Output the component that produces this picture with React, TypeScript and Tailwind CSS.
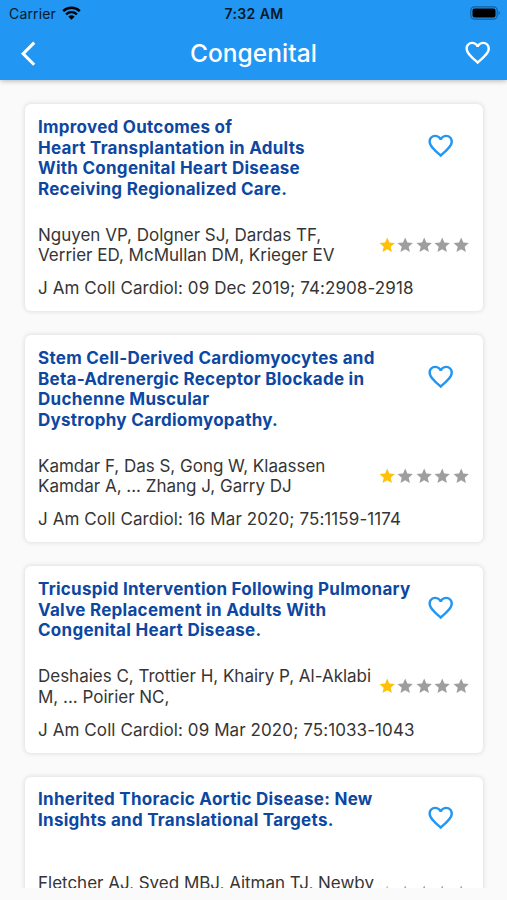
import { MdArrowBackIos, MdFavoriteBorder, MdStar } from "react-icons/md";

type Article = {
	title: string;
	authors: string;
	journal?: string;
	rating: number;
};

const ARTICLES: Article[] = [
	{
		title:
			"Improved Outcomes of\nHeart Transplantation in Adults\nWith Congenital Heart Disease\nReceiving Regionalized Care.",
		authors:
			"Nguyen VP, Dolgner SJ, Dardas TF,\nVerrier ED, McMullan DM, Krieger EV",
		journal: "J Am Coll Cardiol: 09 Dec 2019; 74:2908-2918",
		rating: 1,
	},
	{
		title:
			"Stem Cell-Derived Cardiomyocytes and\nBeta-Adrenergic Receptor Blockade in\nDuchenne Muscular\nDystrophy Cardiomyopathy.",
		authors: "Kamdar F, Das S, Gong W, Klaassen\nKamdar A, ... Zhang J, Garry DJ",
		journal: "J Am Coll Cardiol: 16 Mar 2020; 75:1159-1174",
		rating: 1,
	},
	{
		title:
			"Tricuspid Intervention Following Pulmonary\nValve Replacement in Adults With\nCongenital Heart Disease.",
		authors: "Deshaies C, Trottier H, Khairy P, Al-Aklabi\nM, ... Poirier NC,",
		journal: "J Am Coll Cardiol: 09 Mar 2020; 75:1033-1043",
		rating: 1,
	},
	{
		title:
			"Inherited Thoracic Aortic Disease: New\nInsights and Translational Targets.",
		authors: "Fletcher AJ, Syed MBJ, Aitman TJ, Newby",
		rating: 1,
	},
];

const STARS = [1, 2, 3, 4, 5];

function StatusBar() {
	return (
		<div className="grid h-[27px] grid-cols-3 items-center pl-[9px] pr-[6px] text-[14px] text-[#06192b]">
			<div className="flex items-center gap-[6px]">
				<span className="tracking-[0.15px]">Carrier</span>
				<svg
					className="-mt-[2px]"
					width="19"
					height="14"
					viewBox="0 0 19 14"
					fill="none"
				>
					<path
						d="M1.2 5.1a12 12 0 0 1 16.6 0"
						stroke="#000"
						strokeWidth="2.5"
					/>
					<path
						d="M4.1 8.3a7.8 7.8 0 0 1 10.8 0"
						stroke="#000"
						strokeWidth="2.3"
					/>
					<path d="M9.5 13.8 6.4 10.7a4.5 4.5 0 0 1 6.2 0z" fill="#000" />
				</svg>
			</div>
			<span className="-ml-[2px] text-center font-semibold tracking-[0.4px]">
				7:32 AM
			</span>
			<svg
				className="-mt-[1px] justify-self-end"
				width="31"
				height="14"
				viewBox="0 0 31 14"
			>
				<rect
					x="0.8"
					y="0.8"
					width="26.4"
					height="12.4"
					rx="3.6"
					fill="none"
					stroke="#155f9c"
					strokeWidth="1.2"
				/>
				<rect x="2.5" y="2.5" width="23" height="9" rx="2" fill="#000" />
				<path d="M28.6 5v4c1.6-.6 1.6-3.4 0-4z" fill="#155f9c" />
			</svg>
		</div>
	);
}

function Header() {
	return (
		<header className="relative z-10 h-[80px] shrink-0 bg-[#2196f3] shadow-[0_1px_5px_rgba(0,0,0,0.28)]">
			<StatusBar />
			<div className="grid h-[53px] grid-cols-[60px_1fr_60px] items-center text-white">
				<button type="button" aria-label="Back" className="pl-[20.5px]">
					<MdArrowBackIos className="size-[29.4px]" />
				</button>
				<h1 className="text-center text-[24.5px] font-medium tracking-[0.05px]">
					Congenital
				</h1>
				<button
					type="button"
					aria-label="Favorites"
					className="justify-self-end pr-[15px] pb-[1px]"
				>
					<MdFavoriteBorder className="size-[29.4px]" />
				</button>
			</div>
		</header>
	);
}

function Rating({ value }: { value: number }) {
	return (
		<div className="-mr-[0.5px] flex">
			{STARS.map((star) => (
				<MdStar
					key={star}
					data-on={star <= value}
					className="size-[18.4px] text-[#9e9e9e] data-[on=true]:text-[#ffc107]"
				/>
			))}
		</div>
	);
}

function ArticleCard({ article }: { article: Article }) {
	return (
		<article className="rounded-[6px] bg-white pt-[12.5px] pr-[13px] pb-[12.25px] pl-[13.5px] shadow-[0_0_4px_1px_rgba(0,0,0,0.1)]">
			<div className="flex min-h-[59px] justify-between">
				<h2 className="whitespace-pre text-[17px] leading-[20.75px] font-bold tracking-[0.27px] text-[#0d47a1]">
					{article.title}
				</h2>
				<button
					type="button"
					aria-label="Add to favorites"
					className="mt-[14.25px] mr-[14.25px] h-[29.4px] w-0 text-[#2196f3]"
				>
					<MdFavoriteBorder className="float-right size-[29.4px]" />
				</button>
			</div>
			<div className="mt-[24.75px] flex min-h-[41.5px] items-center justify-between text-[#353535]">
				<p className="self-start whitespace-pre text-[17px] leading-[20.75px] tracking-[-0.01px]">
					{article.authors}
				</p>
				<Rating value={article.rating} />
			</div>
			{article.journal && (
				<p className="mt-[12.25px] whitespace-pre text-[17px] leading-[20.75px] tracking-[0.09px] text-[#353535]">
					{article.journal}
				</p>
			)}
		</article>
	);
}

export default function App() {
	return (
		<div className="flex h-[900px] w-[507px] flex-col overflow-hidden bg-[#fafafa] pb-[12px] font-['Inter',sans-serif]">
			<Header />
			<main className="flex min-h-0 flex-1 flex-col gap-[24px] overflow-hidden px-[24.5px] pt-[24.25px] [&>*]:shrink-0">
				{ARTICLES.map((article) => (
					<ArticleCard key={article.title} article={article} />
				))}
			</main>
		</div>
	);
}
